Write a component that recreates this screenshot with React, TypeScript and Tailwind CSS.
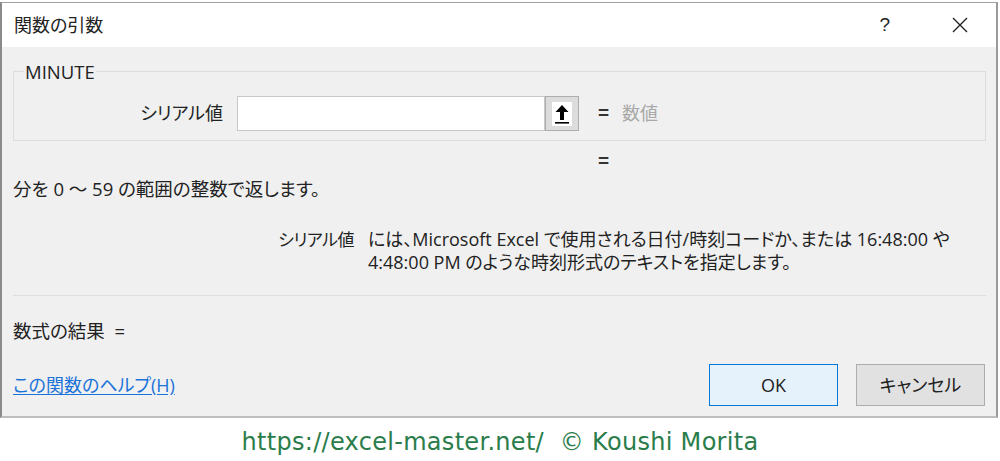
import React from "react";

const jp = { fontFamily: '"Open Sans", "Noto Sans CJK JP", sans-serif' };

export default function App() {
  return (
    <div className="w-[1000px] h-[461px] bg-white relative overflow-hidden [font-feature-settings:'palt']" style={jp}>
      <div className="h-[2px] bg-white" />
      <div className="w-[998px] h-[416px] border-l-2 border-r-2 border-t border-b-2 border-l-[#8a8a8a] border-r-[#9a9a9a] border-t-[#a0a0a0] border-b-[#bdbdbd] flex flex-col">
        {/* title bar */}
        <div className="h-[44px] bg-white flex items-center shrink-0">
          <div className="pl-[12px] text-[18px] text-[#222]">関数の引数</div>
          <div className="ml-auto flex items-center">
            <span className="text-[19px] text-[#222] mr-[62px]" style={{ fontFamily: '"Liberation Sans", sans-serif' }}>?</span>
            <svg width="16" height="16" viewBox="0 0 16 16" className="mr-[28px]">
              <path d="M1 1 L15 15 M15 1 L1 15" stroke="#222" strokeWidth="1.4" />
            </svg>
          </div>
        </div>
        {/* body */}
        <div className="flex-1 bg-[#f0f0f0] flex flex-col px-[11px]">
          {/* group box */}
          <div className="mt-[24px] relative border border-[#dcdcdc] h-[70px] w-[973px]">
            <div className="absolute left-[10px] top-[-14px] px-[1px] bg-[#f0f0f0] text-[18.5px] text-[#222]">MINUTE</div>
            <div className="flex items-center mt-[24px]">
              <div className="w-[209px] text-right text-[18px] text-[#222]">シリアル値</div>
              <div className="ml-[14px] w-[308px] h-[35px] bg-white border border-[#c8c8c8]" />
              <div className="w-[34px] h-[35px] bg-[#dcdcdc] border border-[#adadad] flex items-center justify-center">
                <svg width="22" height="26" viewBox="0 0 22 26">
                  <rect x="1" y="1" width="20" height="24" fill="#ffffff" />
                  <path d="M11 4 L17.5 11 L13 11 L13 19 L9 19 L9 11 L4.5 11 Z" fill="#000" />
                  <rect x="4" y="21" width="14" height="1.6" fill="#000" />
                </svg>
              </div>
              <div className="ml-[19px] text-[19px] font-bold text-[#333]" style={{ fontFamily: '"Liberation Sans", sans-serif' }}>=</div>
              <div className="ml-[13px] text-[18px] text-[#a8a8a8]">数値</div>
            </div>
          </div>
          <div className="h-[22px] relative">
            <div className="absolute left-[585px] top-[6px] text-[19px] font-bold text-[#333]" style={{ fontFamily: '"Liberation Sans", sans-serif' }}>=</div>
          </div>
          <div className="mt-[13px] text-[18.5px] text-[#222] leading-[26px]">
            分を 0 ～ 59 の範囲の整数で返します。
          </div>
          <div className="mt-[26px] flex text-[18px] text-[#222] leading-[23px]">
            <div className="w-[355px] text-right pr-[14px] tracking-[-0.5px] text-[17px]">シリアル値</div>
            <div className="whitespace-nowrap">
              <div>には、Microsoft Excel で使用される日付/時刻コードか、または 16:48:00 や</div>
              <div>4:48:00 PM のような時刻形式のテキストを指定します。</div>
            </div>
          </div>
          <div className="mt-[21px] h-px w-[973px] bg-[#dedede]" />
          <div className="mt-[22px] text-[18.5px] text-[#222] leading-[26px]">数式の結果&nbsp;&nbsp;=</div>
          <div className="mt-[20px] flex items-center">
            <a className="text-[18px] text-[#1a73d9] underline underline-offset-2">この関数のヘルプ(H)</a>
            <div className="ml-auto flex gap-[18px]">
              <div className="w-[129px] h-[42px] bg-[#e5f1fb] border border-[#0078d7] flex items-center justify-center text-[18px] text-[#222]">OK</div>
              <div className="w-[129px] h-[42px] bg-[#e1e1e1] border border-[#adadad] flex items-center justify-center text-[18px] text-[#222]">キャンセル</div>
            </div>
          </div>
        </div>
      </div>
      <div className="flex justify-center mt-[6px]">
        <div className="text-[24px] text-[#2a7d4a] tracking-[0.3px]" style={{ fontFamily: '"DejaVu Sans", sans-serif' }}>
          https://excel-master.net/&nbsp;&nbsp;© Koushi Morita
        </div>
      </div>
    </div>
  );
}
